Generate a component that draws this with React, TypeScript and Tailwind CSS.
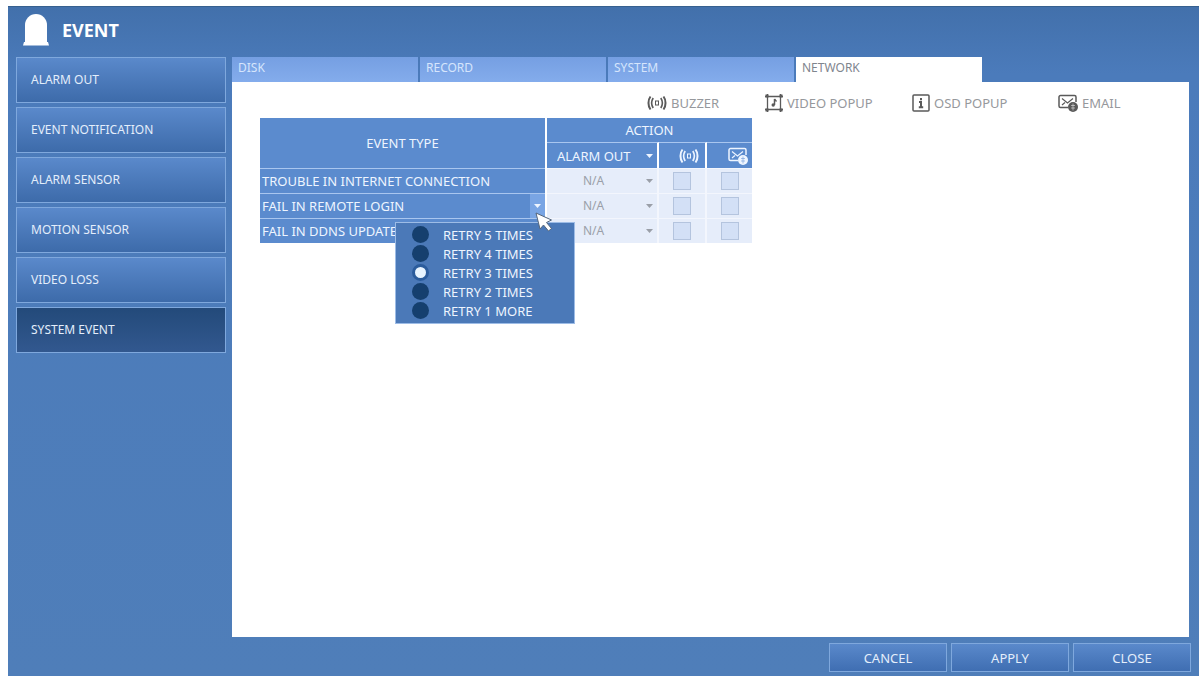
import { useState } from 'react';
import type { ReactNode } from 'react';

const menuItems = ['ALARM OUT', 'EVENT NOTIFICATION', 'ALARM SENSOR', 'MOTION SENSOR', 'VIDEO LOSS', 'SYSTEM EVENT'];
const tabs = ['DISK', 'RECORD', 'SYSTEM', 'NETWORK'];
const events = ['TROUBLE IN INTERNET CONNECTION', 'FAIL IN REMOTE LOGIN', 'FAIL IN DDNS UPDATE'];
const retries = ['RETRY 5 TIMES', 'RETRY 4 TIMES', 'RETRY 3 TIMES', 'RETRY 2 TIMES', 'RETRY 1 MORE'];

function BeaconIcon() {
  return (
    <svg className="w-7 h-8" viewBox="0 0 28 32" fill="#fff" aria-hidden="true">
      <path d="M3 28.500V11a11 11 0 0 1 22 0v17.500z" />
      <path d="M2 28h24l1 3.500H1z" />
    </svg>
  );
}

function BuzzerIcon() {
  return (
    <svg className="w-5 h-4" viewBox="0 0 20 16" fill="none" stroke="currentColor" strokeWidth="2" aria-hidden="true">
      <path d="M3.500 1.500C.8 5 .8 11 3.500 14.500M16.500 1.500c2.700 3.500 2.700 9.500 0 13" />
      <path d="M6.200 3C4.300 6 4.300 10 6.200 13M13.800 3c1.900 3 1.900 7 0 10" strokeWidth="1.600" />
      <rect x="8.500" y="6" width="3" height="4" strokeWidth="1" />
    </svg>
  );
}

function VideoPopupIcon() {
  return (
    <svg className="w-[18px] h-[18px]" viewBox="0 0 18 18" fill="none" stroke="currentColor" strokeWidth="1.3" aria-hidden="true">
      <path d="M0 2.500h18M0 15.500h18M2.500 0v18M15.500 0v18" />
      <path d="M.5 .5h3v3h-3zM14.500 .5h3v3h-3zM.5 14.500h3v3h-3zM14.500 14.500h3v3h-3z" fill="currentColor" strokeWidth="0" />
      <path d="M9.500 5v6" strokeWidth="1.500" />
      <path d="M9.500 5l2 2.500" />
      <circle cx="8.200" cy="11" r="1.700" fill="currentColor" strokeWidth="0" />
    </svg>
  );
}

function OsdIcon() {
  return (
    <svg className="w-[18px] h-[18px]" viewBox="0 0 18 18" fill="none" stroke="currentColor" aria-hidden="true">
      <rect x="1" y="1" width="16" height="16" rx="1" strokeWidth="1.500" />
      <path d="M9 4v2.200M7 8h2v5M6.800 13.300h4.400" strokeWidth="2" />
    </svg>
  );
}

function EmailIcon({ lines = '#fff' }: { lines?: string }) {
  return (
    <svg className="w-5 h-[18px]" viewBox="0 0 20 18" fill="none" stroke="currentColor" strokeWidth="1.5" aria-hidden="true">
      <path d="M10 13.500H2.500A1.500 1.500 0 0 1 1 12V3a1.500 1.500 0 0 1 1.500-1.500h14A1.500 1.500 0 0 1 18 3v5" />
      <path d="M4 4.500l5.500 4.500L15 4.500M4 11l3-2.500" strokeWidth="1.200" />
      <circle cx="15" cy="13" r="5" fill="currentColor" strokeWidth="0" />
      <path d="M13 11.500h4M13 14h4M15 9.500v7" stroke={lines} strokeWidth=".5" />
    </svg>
  );
}

function Arrow({ className = '' }: { className?: string }) {
  return (
    <svg className={`w-[7px] h-1 ${className}`} viewBox="0 0 7 4" fill="currentColor" aria-hidden="true">
      <path d="M0 0h7L3.500 4z" />
    </svg>
  );
}

function Legend({ icon, children }: { icon: ReactNode; children: ReactNode }) {
  return (
    <li className="flex items-center gap-1 text-[#5a5a5a]">
      {icon}
      <span className="text-[#96989c]">{children}</span>
    </li>
  );
}

function CellSelect({ label, value, className }: { label: string; value: string; className: string }) {
  return (
    <div className="relative flex items-center">
      <select aria-label={label} className={`w-full appearance-none bg-transparent outline-none ${className}`}>
        <option>{value}</option>
      </select>
      <Arrow className="absolute right-1 pointer-events-none" />
    </div>
  );
}

const headCell = 'bg-[#5b8bce] font-normal p-0 border-white';
const bodyCell = 'bg-[#e6edfa] p-0 border-[#f3f6fd]';
const boxClass = 'block mx-auto w-[18px] h-[18px] appearance-none border border-[#b4c4de] bg-[#d3e0f6] checked:bg-[#5b8bce]';

export default function App() {
  const [section, setSection] = useState('SYSTEM EVENT');
  const [tab, setTab] = useState('NETWORK');
  const [retry, setRetry] = useState('RETRY 3 TIMES');
  const [open, setOpen] = useState(true);

  return (
    <div className="min-h-screen flex bg-white pt-1.5 pl-2 pr-0.5 font-['Noto_Sans','Open_Sans',sans-serif] text-[13px] leading-4">
      <div className="flex-1 flex flex-col bg-linear-to-b from-[#4270ab] via-[#4b7bbb] via-10% to-[#4f7eb9] border-t border-[#36608f] px-2">
        <header className="flex items-center gap-3 h-[50px] pl-1.5 pb-1">
          <BeaconIcon />
          <h1 className="text-lg font-bold text-white">EVENT</h1>
        </header>

        <div className="flex-1 flex gap-1.5">
          <nav className="w-[210px] shrink-0 flex flex-col gap-1" aria-label="Event settings">
            {menuItems.map((item) => (
              <button
                key={item}
                onClick={() => setSection(item)}
                className={`h-[46px] px-3.5 text-left text-xs text-[#e4eefb] border border-[#7fa8dd] ${
                  section === item
                    ? 'bg-linear-to-b from-[#234a7a] to-[#32588f]'
                    : 'bg-linear-to-b from-[#5a89cb] to-[#3d6baa]'
                }`}
              >
                {item}
              </button>
            ))}
          </nav>

          <main className="flex-1 flex flex-col">
            <div className="flex pr-[209px] gap-0.5" role="tablist">
              {tabs.map((name) => (
                <button
                  key={name}
                  role="tab"
                  aria-selected={tab === name}
                  onClick={() => setTab(name)}
                  className={`flex-1 h-[25px] pl-1.5 pb-1 text-left text-xs ${
                    tab === name ? 'bg-white text-[#7f858e]' : 'bg-linear-to-b from-[#759fe2] to-[#84acec] text-[#d6e5fc]'
                  }`}
                >
                  {name}
                </button>
              ))}
            </div>

            <section className="flex-1 bg-white mr-0.5 pl-7">
              <ul className="h-9 pt-1.5 grid grid-cols-[118px_147px_146px_131px] justify-end items-center">
                <Legend icon={<BuzzerIcon />}>BUZZER</Legend>
                <Legend icon={<VideoPopupIcon />}>VIDEO POPUP</Legend>
                <Legend icon={<OsdIcon />}>OSD POPUP</Legend>
                <Legend icon={<EmailIcon />}>EMAIL</Legend>
              </ul>

              <table className="w-[492px] table-fixed border-separate border-spacing-0 text-[#eef5ff]">
                <colgroup>
                  <col className="w-[287px]" />
                  <col className="w-[112px]" />
                  <col className="w-12" />
                  <col />
                </colgroup>
                <thead>
                  <tr className="h-6">
                    <th rowSpan={2} className={`${headCell} border-r-2`}>EVENT TYPE</th>
                    <th colSpan={3} className={headCell}>ACTION</th>
                  </tr>
                  <tr className="h-[26px]">
                    <th className={`${headCell} border-r-2 border-t border-t-[#a9c6ef]`}>
                      <CellSelect label="Alarm out for all events" value="ALARM OUT" className="pl-2.5" />
                    </th>
                    <th className={`${headCell} border-r-2 border-t border-t-[#a9c6ef]`}>
                      <span className="flex justify-end pr-1.5" role="img" aria-label="Buzzer"><BuzzerIcon /></span>
                    </th>
                    <th className={`${headCell} border-t border-t-[#a9c6ef]`}>
                      <span className="flex justify-end pr-1" role="img" aria-label="Email"><EmailIcon lines="#5b8bce" /></span>
                    </th>
                  </tr>
                </thead>
                <tbody>
                  {events.map((event) => (
                    <tr key={event} className="h-[25px]">
                      <td className="p-0 border-r-2 border-white">
                        <div className="relative flex items-center h-[25px] pl-0.5 bg-[#5b8bce] border-t border-[#a9c6ef]">
                          {event}
                          {event === 'FAIL IN REMOTE LOGIN' && (
                            <>
                              <button
                                aria-label="Retry count"
                                aria-expanded={open}
                                onClick={() => setOpen(!open)}
                                className="absolute right-0 top-0 w-[15px] h-6 flex items-center justify-center bg-[#79a5e4]"
                              >
                                <Arrow />
                              </button>
                              {open && (
                                <div className="absolute z-10 top-7 -right-[30px] w-[180px] h-[102px] pt-0.5 bg-[#4b79b8] border border-[#9dbce6]">
                                  {retries.map((name) => (
                                    <label key={name} className="flex items-center gap-3.5 h-[19px] pl-4">
                                      <input
                                        type="radio"
                                        name="retry"
                                        checked={retry === name}
                                        onChange={() => setRetry(name)}
                                        className="w-[17px] h-[17px] appearance-none rounded-full bg-[#153f6e] checked:bg-[#e8f4ff] checked:border-[3px] checked:border-[#2b5c9c]"
                                      />
                                      {name}
                                    </label>
                                  ))}
                                </div>
                              )}
                              <svg className="absolute z-20 top-[18px] -right-2 w-[18px] h-5 pointer-events-none" viewBox="0 0 18 20" aria-hidden="true">
                                <path d="M1 1l15.500 7-5 2.500 5 6-3 2.500-5-6L5 17z" fill="#fff" stroke="#55667c" strokeLinejoin="round" />
                              </svg>
                            </>
                          )}
                        </div>
                      </td>
                      <td className={`${bodyCell} border-r-2 border-t text-[#9a9fa8]`}>
                        <CellSelect label={`Alarm out: ${event}`} value="N/A" className="pl-9 text-xs" />
                      </td>
                      <td className={`${bodyCell} border-r-2 border-t`}>
                        <input type="checkbox" aria-label={`Buzzer: ${event}`} className={boxClass} />
                      </td>
                      <td className={`${bodyCell} border-t`}>
                        <input type="checkbox" aria-label={`Email: ${event}`} className={boxClass} />
                      </td>
                    </tr>
                  ))}
                </tbody>
              </table>
            </section>
          </main>
        </div>

        <footer className="flex justify-end gap-1 pt-1.5 pb-1">
          {['CANCEL', 'APPLY', 'CLOSE'].map((name) => (
            <button
              key={name}
              className="w-[118px] h-[29px] text-[#e4eefb] border border-[#7fa8dd] bg-linear-to-b from-[#5a89cb] to-[#3f6eb2]"
            >
              {name}
            </button>
          ))}
        </footer>
      </div>
    </div>
  );
}
